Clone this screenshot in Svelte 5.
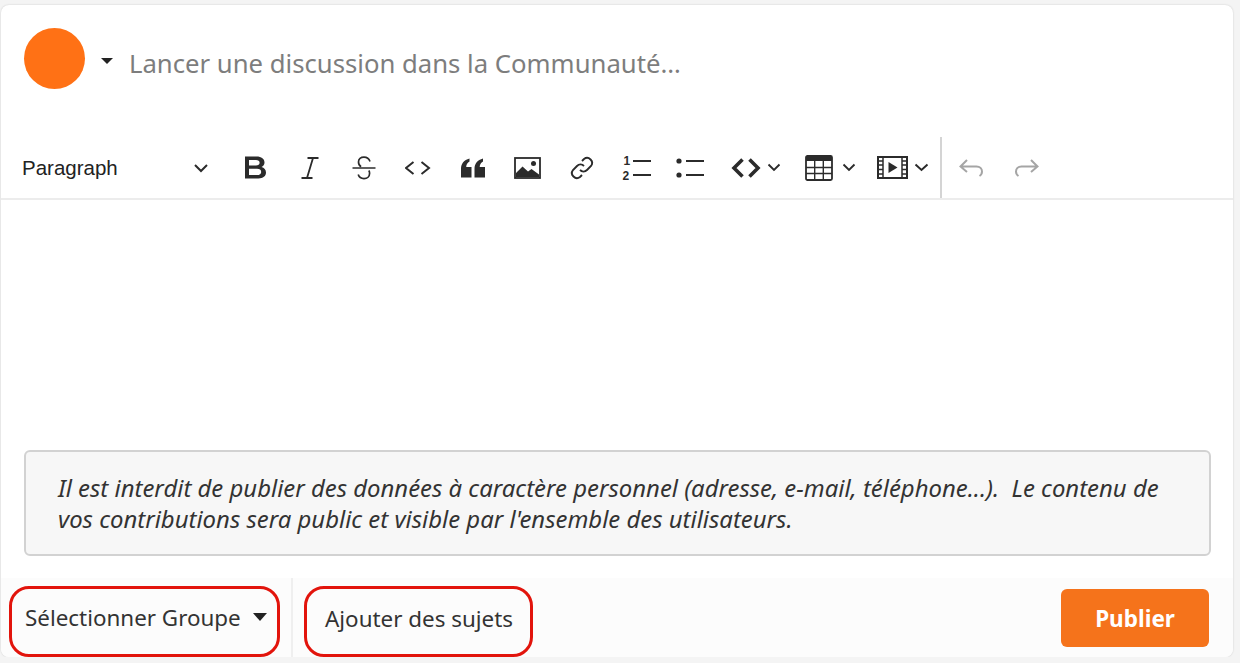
<script lang="ts">
    let placeholder = 'Lancer une discussion dans la Communauté…';
</script>

<div class="composer">
    <header class="head">
        <div class="avatar"></div>
        <span class="caret author-caret"></span>
        <span class="placeholder">{placeholder}</span>
    </header>

    <div class="toolbar">
        <div class="format">
            <span>Paragraph</span>
            <svg width="16" height="10" viewBox="0 0 16 10"><path d="M2 2l6 6 6-6" class="line" stroke-width="2"/></svg>
        </div>

        <button class="tool" aria-label="Bold">
            <svg width="21" height="23" viewBox="0 0 21 23"><path fill-rule="evenodd" d="M0 .5h11.500C16.500.5 19.500 3 19.500 6.500c0 2.200-1.200 3.800-3 4.600 2.700.7 4.500 2.800 4.500 5.500 0 3.700-3 5.900-7.500 5.900H0zm4 3.500v5.400h7c2.200 0 3.600-1 3.600-2.700S13.200 4 11 4zm0 8.800V19h8c2.600 0 4.200-1.100 4.200-3.100s-1.600-3.100-4.200-3.100z" fill="#2b2b2b"/></svg>
        </button>
        <button class="tool" aria-label="Italic">
            <svg width="24" height="24" viewBox="0 0 24 24"><path d="M9.500 2h11M3.500 22h11M15 2 9 22" class="line" stroke-width="1.800"/></svg>
        </button>
        <button class="tool" aria-label="Strikethrough">
            <svg width="24" height="24" viewBox="0 0 24 24"><path d="M.5 12h23" class="line" stroke-width="1.700"/><path d="M18 5.500C17 2.700 14.800 1.200 12 1.200 8.800 1.200 6.500 3 6.500 6c0 2.200 1 3.800 2.600 4.800M16.800 14.500c.5.800.8 1.700.8 2.700 0 3.200-2.400 5.400-5.600 5.400-2.900 0-5-1.500-5.800-4" class="line" stroke-width="1.700"/></svg>
        </button>
        <button class="tool" aria-label="Inline code">
            <svg width="28" height="18" viewBox="0 0 28 18"><path d="M8.500 3 1 9l7.500 6M16.500 3l7.500 6-7.500 6" class="line" stroke-width="2"/></svg>
        </button>
        <button class="tool" aria-label="Quote">
            <svg width="24" height="20" viewBox="0 0 24 20"><path d="M0 19.500V11C0 5.500 3 2 8.500.5v3C6.500 4.500 5.300 6.500 5.200 9H10.500v10.500zM13.500 19.500V11c0-5.500 3-9 8.500-10.500v3c-2 1-3.200 3-3.300 5.500H24v10.500z" fill="#2b2b2b"/></svg>
        </button>
        <button class="tool" aria-label="Image">
            <svg width="27" height="22" viewBox="0 0 27 22"><rect x="1" y="1" width="25" height="20" fill="none" stroke="#2b2b2b" stroke-width="1.800"/><circle cx="19.500" cy="6.500" r="2.500" fill="#2b2b2b"/><path d="M2 20v-4l6.500-6.500 5.500 5 3.500-2.500L25 17.500V20z" fill="#2b2b2b"/></svg>
        </button>
        <button class="tool" aria-label="Link">
            <svg width="26" height="26" viewBox="0 0 26 26"><path d="M11 15a5 5 0 0 0 7 0l4-4a5 5 0 0 0-7-7l-2 2M15 11a5 5 0 0 0-7 0l-4 4a5 5 0 0 0 7 7l2-2" class="line" stroke-width="1.900"/></svg>
        </button>
        <button class="tool" aria-label="Ordered list">
            <svg width="30" height="30" viewBox="0 0 30 30"><text x="1.500" y="11.500" class="num">1</text><text x="0.500" y="27" class="num">2</text><path d="M11 8h18M11 22h18" class="line" stroke-width="1.900"/></svg>
        </button>
        <button class="tool" aria-label="Bullet list">
            <svg width="30" height="24" viewBox="0 0 30 24"><circle cx="3" cy="5" r="2.600" fill="#2b2b2b"/><circle cx="3" cy="19" r="2.600" fill="#2b2b2b"/><path d="M10 5h18M10 19h18" class="line" stroke-width="1.900"/></svg>
        </button>

        <button class="tool code" aria-label="Code block">
            <svg width="34" height="24" viewBox="0 0 34 24"><path d="M13.500 3.500 5 12l8.500 8.500M20.500 3.500 29 12l-8.500 8.500" class="line" stroke-width="3.600"/></svg>
            <svg class="chev" width="14" height="9" viewBox="0 0 14 9"><path d="M1.500 1.500 7 7l5.500-5.500" class="line" stroke-width="1.900"/></svg>
        </button>
        <button class="tool table" aria-label="Table">
            <svg width="28" height="26" viewBox="0 0 28 26"><rect x="1" y="1" width="26" height="24" rx="1.500" fill="none" stroke="#2b2b2b" stroke-width="1.800"/><rect x="1" y="1" width="26" height="5" fill="#2b2b2b"/><path d="M1 12.500h26M1 18.500h26M9.700 6v19M18.300 6v19" class="line" stroke-width="1.400"/></svg>
            <svg class="chev" width="14" height="9" viewBox="0 0 14 9"><path d="M1.500 1.500 7 7l5.500-5.500" class="line" stroke-width="1.900"/></svg>
        </button>
        <button class="tool media" aria-label="Media">
            <svg width="31" height="23" viewBox="0 0 31 23"><rect x="1" y="1" width="29" height="21" fill="none" stroke="#2b2b2b" stroke-width="2"/><path d="M6 1v21M25 1v21" class="line" stroke-width="1.500"/><path d="M1 5h5M1 9h5M1 13.500h5M1 18h5M25 5h5M25 9h5M25 13.500h5M25 18h5" class="line" stroke-width="1.300"/><path d="M11.500 6 20.500 11.500 11.500 17z" fill="#2b2b2b"/></svg>
            <svg class="chev" width="15" height="9" viewBox="0 0 15 9"><path d="M1.500 1.500 7.500 7l6-5.500" class="line" stroke-width="2"/></svg>
        </button>

        <div class="tool-sep"></div>

        <button class="tool undo" aria-label="Undo">
            <svg width="28" height="22" viewBox="0 0 28 22"><path d="M9 3 2.500 9.500 9 15M3 9.500h15.500c3.500 0 5.500 2.200 5.500 5 0 2-1 3.600-2.500 4.500" class="faded" stroke-width="2"/></svg>
        </button>
        <button class="tool" aria-label="Redo">
            <svg width="28" height="22" viewBox="0 0 28 22"><path d="M19 3l6.500 6.500L19 15M25 9.500H9.500c-3.500 0-5.500 2.200-5.500 5 0 2 1 3.600 2.500 4.500" class="faded" stroke-width="2"/></svg>
        </button>
    </div>

    <div class="body">
        <p class="notice">Il est interdit de publier des données à caractère personnel (adresse, e-mail, téléphone...).&nbsp; Le contenu de vos contributions sera public et visible par l'ensemble des utilisateurs.</p>
    </div>

    <footer class="foot">
        <button class="pick group">
            Sélectionner Groupe
            <span class="caret"></span>
        </button>
        <div class="foot-sep"></div>
        <button class="pick topics">Ajouter des sujets</button>
        <button class="publish">Publier</button>
    </footer>
</div>

<style>
    :global(body) {
        background: #f4f4f4;
    }

    .composer {
        box-sizing: border-box;
        width: 1232px;
        height: 652px;
        margin: 5px 0 0 1px;
        display: flex;
        flex-direction: column;
        background: #fff;
        border-radius: 8px;
        box-shadow: 0 0 2px rgba(0, 0, 0, 0.18);
        font-family: "Noto Sans", sans-serif;
        overflow: hidden;
    }

    .head {
        height: 132px;
        flex: none;
        box-sizing: border-box;
        padding: 23px 0 0 23px;
        display: flex;
        align-items: flex-start;
    }

    .avatar {
        width: 61px;
        height: 61px;
        border-radius: 50%;
        background: #ff7115;
    }

    .caret {
        display: inline-block;
        width: 0;
        height: 0;
        border-left: 6.500px solid transparent;
        border-right: 6.500px solid transparent;
        border-top: 6.500px solid #222;
    }

    .author-caret {
        margin: 30px 0 0 16px;
    }

    .placeholder {
        margin: 18px 0 0 16px;
        font-size: 25.700px;
        line-height: 36px;
        color: #7d7d7d;
        white-space: nowrap;
    }

    .toolbar {
        height: 63px;
        flex: none;
        box-sizing: border-box;
        display: flex;
        align-items: center;
        padding-left: 21px;
        border-bottom: 2px solid #ececec;
    }

    .format {
        width: 206px;
        flex: none;
        display: flex;
        align-items: center;
        justify-content: space-between;
        padding-right: 19px;
        box-sizing: border-box;
        font-family: "Liberation Sans", sans-serif;
        font-size: 20.500px;
        color: #222;
    }

    .tool {
        width: 54.500px;
        height: 40px;
        flex: none;
        display: flex;
        align-items: center;
        justify-content: center;
        padding: 0;
        border: none;
        background: none;
    }

    .code { width: 73px; gap: 4px; }
    .table { width: 78px; gap: 9px; }
    .media { width: 66px; gap: 6px; }

    .tool-sep {
        width: 2px;
        height: 61px;
        margin-left: 4.500px;
        background: #d4d4d4;
    }

    .undo { width: 53px; margin-left: 3.500px; }

    .line {
        fill: none;
        stroke: #2b2b2b;
    }

    .faded {
        fill: none;
        stroke: #a5a5a5;
    }

    .num {
        font-family: "Liberation Sans", sans-serif;
        font-size: 12px;
        font-weight: 700;
        fill: #2b2b2b;
    }

    .body {
        flex: 1;
        display: flex;
        flex-direction: column;
        justify-content: flex-end;
        padding: 0 22px 22px 23px;
    }

    .notice {
        box-sizing: border-box;
        height: 106px;
        margin: 0;
        padding: 21px 30px 0 32px;
        background: #f7f7f7;
        border: 2px solid #d2d2d2;
        border-radius: 6px;
        font-size: 23.900px;
        line-height: 30.500px;
        font-style: italic;
        color: #333;
    }

    .foot {
        height: 79px;
        flex: none;
        display: flex;
        align-items: flex-start;
        background: #fcfcfc;
        padding-left: 8px;
    }

    .pick {
        box-sizing: border-box;
        height: 71px;
        margin-top: 8px;
        display: flex;
        align-items: center;
        background: none;
        border: 3px solid #e2140c;
        border-radius: 20px;
        font-family: "Noto Sans", sans-serif;
        font-size: 22.400px;
        color: #333;
        white-space: nowrap;
    }

    .group {
        width: 271px;
        padding: 0 0 9px 13px;
        gap: 12px;
    }

    .group .caret {
        border-left-width: 7px;
        border-right-width: 7px;
        border-top-width: 8px;
    }

    .foot-sep {
        width: 2px;
        height: 79px;
        margin: 0 11px 0 11px;
        background: #efefef;
    }

    .topics {
        width: 229px;
        padding: 0 0 6px 18px;
    }

    .publish {
        width: 148px;
        height: 58px;
        margin: 11px 24px 0 auto;
        background: #f5731b;
        border: none;
        border-radius: 6px;
        color: #fff;
        font-family: "Noto Sans", sans-serif;
        font-size: 22.500px;
        font-weight: 700;
    }
</style>
